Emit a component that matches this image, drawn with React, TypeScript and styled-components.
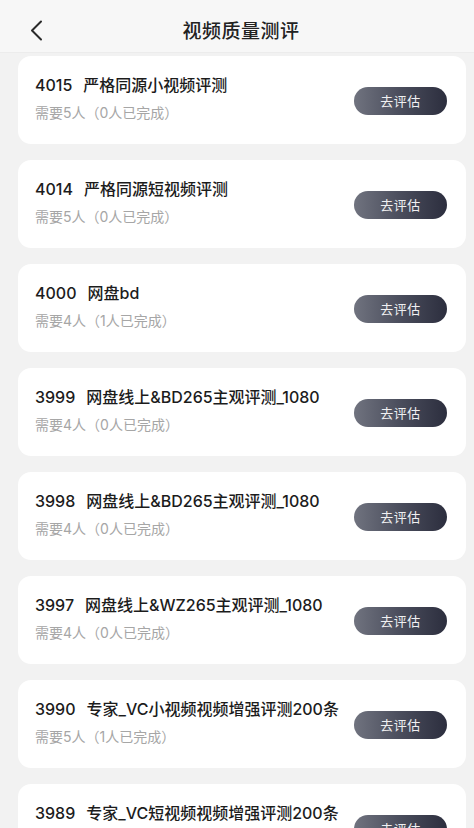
import React from "react";
import styled, { createGlobalStyle } from "styled-components";

const GlobalStyle = createGlobalStyle`
  html, body {
    margin: 0;
    padding: 0;
    background: #f2f2f2;
  }
  body {
    font-family: Inter, "Noto Sans CJK SC", sans-serif;
    -webkit-font-smoothing: antialiased;
  }
`;

const Page = styled.div`
  width: 474px;
  height: 828px;
  overflow: hidden;
  background: #f2f2f2;
  display: flex;
  flex-direction: column;
`;

const Header = styled.header`
  position: relative;
  flex: none;
  height: 52px;
  display: flex;
  align-items: center;
  justify-content: center;
  background: #f7f7f7;
  border-bottom: 1px solid #ececec;
`;

const BackButton = styled.button`
  position: absolute;
  left: 26px;
  top: 17px;
  width: 20px;
  height: 26px;
  padding: 0;
  border: none;
  background: none;
  display: flex;
  align-items: center;
  justify-content: center;
`;

const Title = styled.h1`
  margin: 0 0 0 8px;
  font-family: "Noto Sans CJK SC", sans-serif;
  font-size: 19px;
  font-weight: 500;
  color: #222;
  letter-spacing: 0.5px;
  line-height: 26px;
  padding-top: 8px;
`;

const List = styled.div`
  display: flex;
  flex-direction: column;
  gap: 16px;
  padding: 3px 8px 0 18px;
`;

const Card = styled.div`
  height: 88px;
  box-sizing: border-box;
  background: #fff;
  border-radius: 13px;
  display: flex;
  align-items: center;
  padding: 0 19px 0 17px;
`;

const Info = styled.div`
  flex: 1;
  min-width: 0;
  display: flex;
  flex-direction: column;
  gap: 9px;
  margin-top: -4px;
`;

const Name = styled.div`
  font-size: 16px;
  font-weight: 500;
  color: #1c1c1c;
  line-height: 20px;
  white-space: nowrap;
`;

const Num = styled.span`
  margin-right: 11px;
`;

const Sub = styled.div`
  font-size: 14px;
  color: #a6a6a6;
  line-height: 18px;
`;

const GoButton = styled.button`
  flex: none;
  width: 93px;
  height: 28px;
  margin-top: 2px;
  border: none;
  border-radius: 14px;
  background: linear-gradient(90deg, #70737f 0%, #4a4d5c 50%, #2c2e3e 100%);
  color: #f0f0f2;
  font-family: "Noto Sans CJK SC", sans-serif;
  font-size: 13px;
  padding: 0 0 2px;
  letter-spacing: 0.5px;
`;

type Task = {
  id: string;
  name: string;
  need: number;
  done: number;
};

const tasks: Task[] = [
  { id: "4015", name: "严格同源小视频评测", need: 5, done: 0 },
  { id: "4014", name: "严格同源短视频评测", need: 5, done: 0 },
  { id: "4000", name: "网盘bd", need: 4, done: 1 },
  { id: "3999", name: "网盘线上&BD265主观评测_1080", need: 4, done: 0 },
  { id: "3998", name: "网盘线上&BD265主观评测_1080", need: 4, done: 0 },
  { id: "3997", name: "网盘线上&WZ265主观评测_1080", need: 4, done: 0 },
  { id: "3990", name: "专家_VC小视频视频增强评测200条", need: 5, done: 1 },
  { id: "3989", name: "专家_VC短视频视频增强评测200条", need: 5, done: 0 },
];

export default function App() {
  return (
    <Page>
      <GlobalStyle />
      <Header>
        <BackButton aria-label="返回">
          <svg width="14" height="21" viewBox="0 0 14 21" fill="none">
            <path
              d="M12 1.5 L3 10.5 L12 19.5"
              stroke="#2a2a2a"
              strokeWidth="2"
              strokeLinecap="round"
              strokeLinejoin="round"
            />
          </svg>
        </BackButton>
        <Title>视频质量测评</Title>
      </Header>
      <List>
        {tasks.map((t) => (
          <Card key={t.id}>
            <Info>
              <Name>
                <Num>{t.id}</Num>
                {t.name}
              </Name>
              <Sub>
                需要{t.need}人（{t.done}人已完成）
              </Sub>
            </Info>
            <GoButton>去评估</GoButton>
          </Card>
        ))}
      </List>
    </Page>
  );
}
